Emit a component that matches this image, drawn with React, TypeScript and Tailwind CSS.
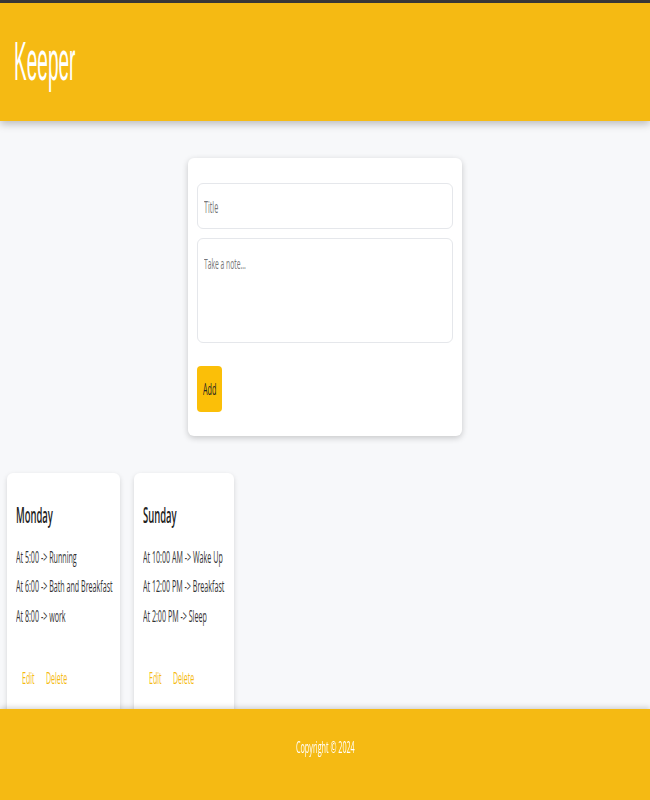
import React, { useState } from 'react';

// the reference renders every glyph very narrow, so text is squeezed horizontally
const Squeeze = ({ children, className = 'scale-x-[0.45]' }: { children: React.ReactNode; className?: string }) => (
  <span className={`inline-block whitespace-nowrap origin-left ${className}`}>{children}</span>
);

type Note = { title: string; lines: string[]; width: string };

const notes: Note[] = [
  { title: 'Monday', lines: ['At 5:00 -> Running', 'At 6:00 -> Bath and Breakfast', 'At 8:00 -> work'], width: 'w-[113px]' },
  { title: 'Sunday', lines: ['At 10:00 AM -> Wake Up', 'At 12:00 PM -> Breakfast', 'At 2:00 PM -> Sleep'], width: 'w-[100px]' },
];

const NoteCard = ({ note }: { note: Note }) => (
  <div className={`${note.width} h-[250px] bg-white rounded-md shadow-[0_2px_5px_rgba(0,0,0,0.15)] px-[9px] pt-[32px]`}>
    <h1 className="text-[21px] font-semibold text-[#222] leading-none">
      <Squeeze>{note.title}</Squeeze>
    </h1>
    <div className="mt-[16px] flex flex-col">
      {note.lines.map((l) => (
        <p key={l} className="text-[17px] leading-[29.3px] text-[#333]">
          <Squeeze className="scale-x-[0.42]">{l}</Squeeze>
        </p>
      ))}
    </div>
    <div className="mt-[36px] flex gap-[12px] pl-[6px] text-[16px] text-[#f5ba13]">
      <button className="w-[12px] text-left"><Squeeze className="scale-x-[0.44]">Edit</Squeeze></button>
      <button className="w-[22px] text-left"><Squeeze className="scale-x-[0.44]">Delete</Squeeze></button>
    </div>
  </div>
);

const App = () => {
  const [title, setTitle] = useState('');
  const [content, setContent] = useState('');

  return (
    <div className="min-h-screen bg-[#f7f8fa] font-['Open_Sans',sans-serif] border-t-[3px] border-[#3a3a3a]">
      <header className="h-[118px] bg-[#f5ba13] shadow-[0_3px_8px_rgba(0,0,0,0.25)] px-[14px] pt-[30px]">
        <h1 className="text-[56px] leading-none text-white font-['Liberation_Sans_Narrow','Liberation_Sans',sans-serif]">
          <Squeeze className="scale-x-[0.34]">Keeper</Squeeze>
        </h1>
      </header>

      <form
        onSubmit={(e) => e.preventDefault()}
        className="mx-auto mt-[37px] w-[274px] bg-white rounded-md shadow-[0_2px_6px_rgba(0,0,0,0.2)] px-[9px] pt-[25px] pb-[24px]"
      >
        <div className="h-[46px] border border-[#e5e7eb] rounded-md px-[6px] pt-[2px] flex items-center text-[16px] text-[#777]">
          <Squeeze>{title || 'Title'}</Squeeze>
          <input className="hidden" value={title} onChange={(e) => setTitle(e.target.value)} />
        </div>
        <div className="mt-[9px] h-[105px] border border-[#e5e7eb] rounded-md px-[6px] pt-[13px] text-[15px] text-[#777]">
          <Squeeze>{content || 'Take a note...'}</Squeeze>
          <textarea className="hidden" value={content} onChange={(e) => setContent(e.target.value)} />
        </div>
        <button type="submit" className="mt-[23px] w-[25px] h-[46px] bg-[#fbbf08] rounded-[4px] text-[16px] text-[#222] pl-[6px] text-left">
          <Squeeze>Add</Squeeze>
        </button>
      </form>

      <div className="mt-[37px] flex gap-[14px] px-[7px]">
        {notes.map((n) => (
          <NoteCard key={n.title} note={n} />
        ))}
      </div>

      <footer className="fixed bottom-0 left-0 right-0 h-[91px] bg-[#f5ba13] shadow-[0_-2px_5px_rgba(0,0,0,0.15)] flex justify-center pt-[27px]">
        <p className="text-[16px] leading-[22px] text-white w-[58px]">
          <Squeeze>Copyright © 2024</Squeeze>
        </p>
      </footer>
    </div>
  );
};

export default App;
